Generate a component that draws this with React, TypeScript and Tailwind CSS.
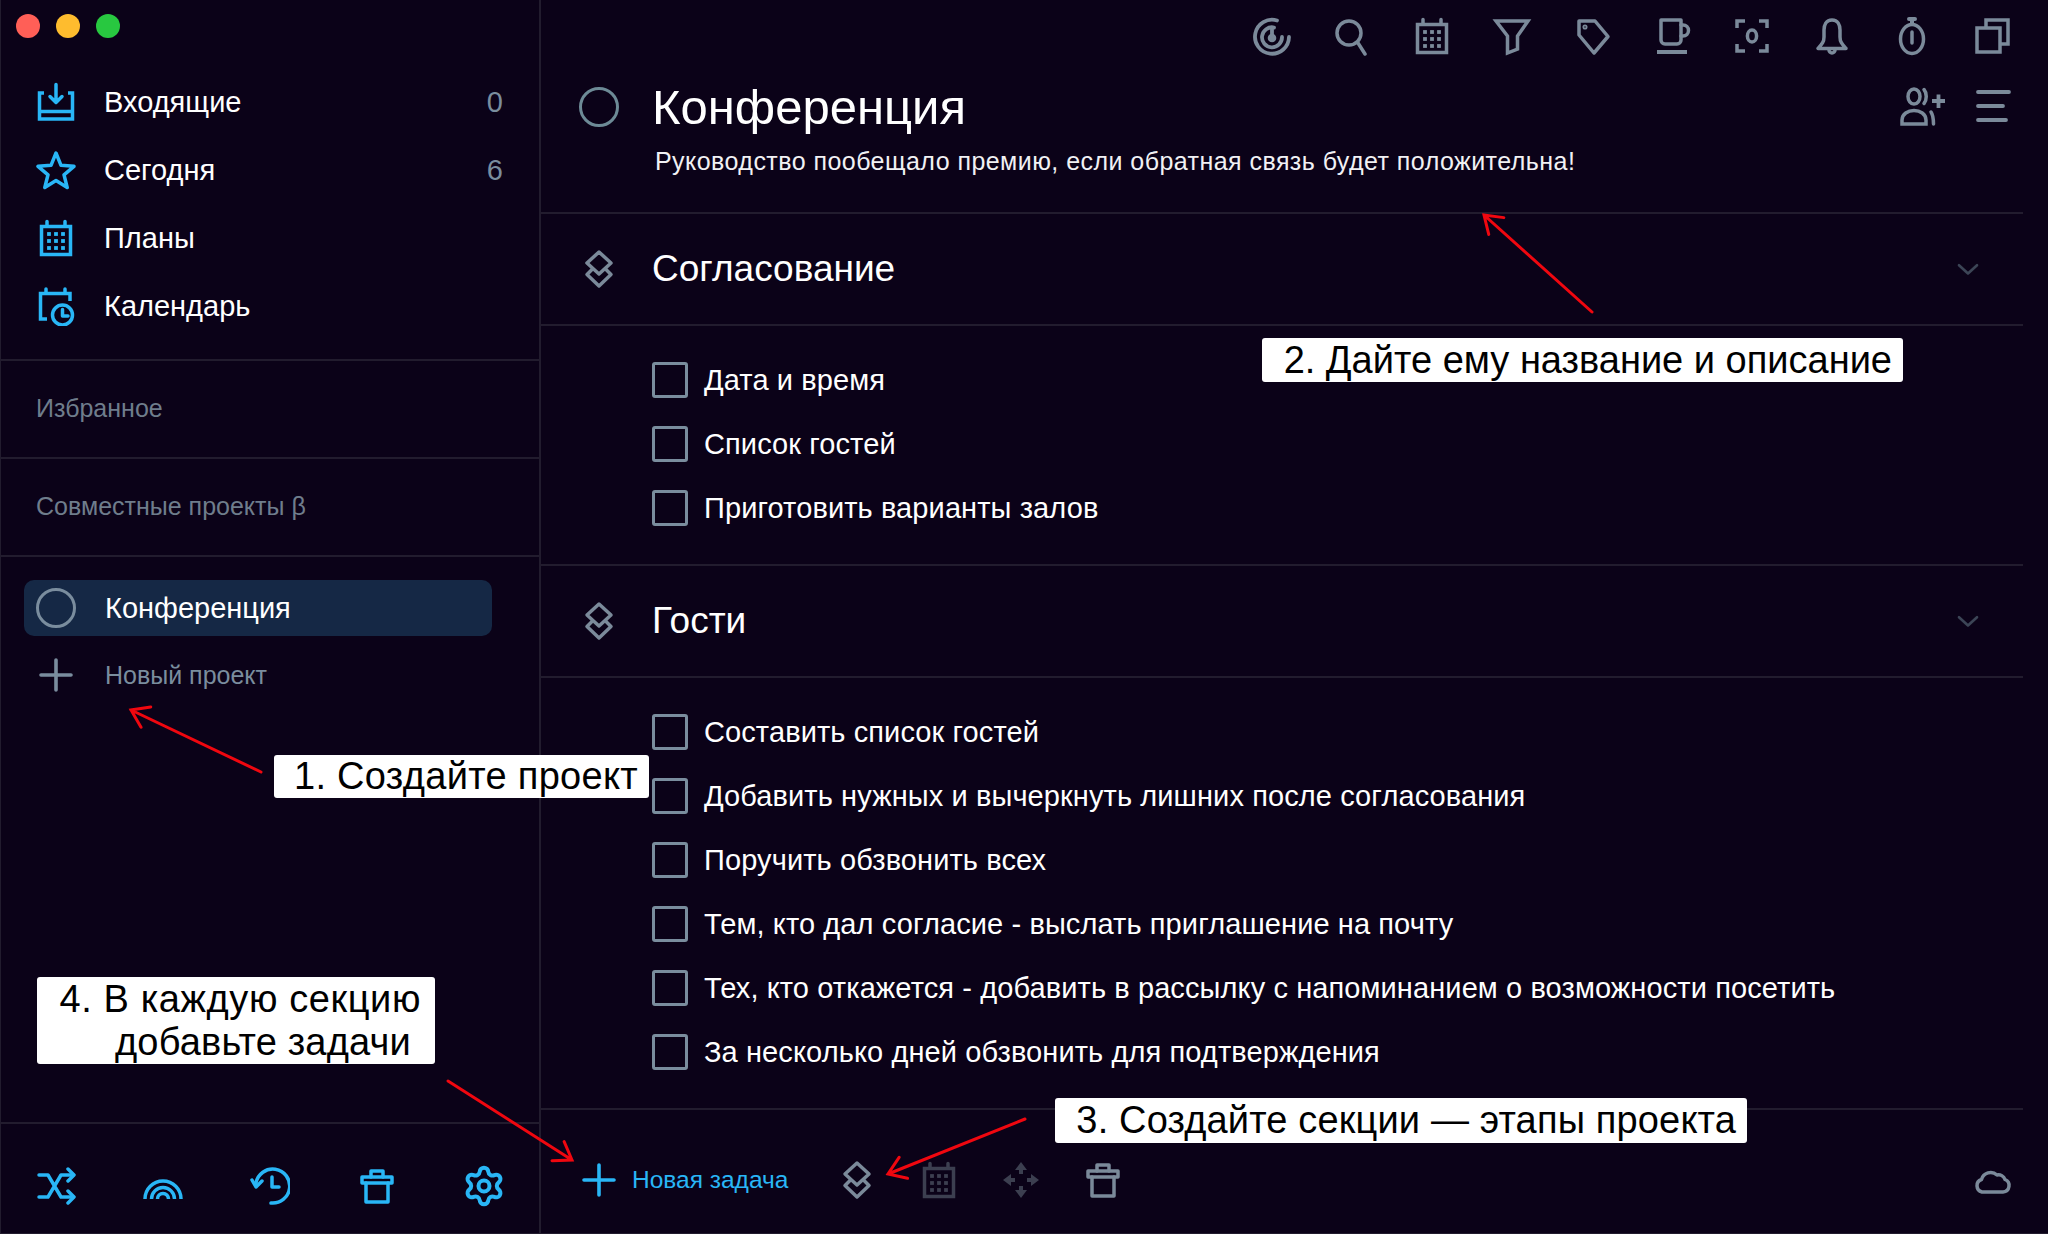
import React from 'react';
import { Settings } from 'lucide-react';

type IconProps = { className?: string };

const Svg = ({ className, box = '0 0 40 40', sw = 3.5, children }: IconProps & { box?: string; sw?: number; children: React.ReactNode }) => (
  <svg viewBox={box} fill="none" stroke="currentColor" strokeWidth={sw} strokeLinecap="round" strokeLinejoin="round" className={className}>
    {children}
  </svg>
);

const Dots = ({ x, y, step }: { x: number; y: number; step: number }) => (
  <g fill="currentColor" stroke="none">
    {[0, 1, 2].flatMap((r) =>
      [0, 1, 2].map((c) => <rect key={`${r}-${c}`} x={x + c * step} y={y + r * step} width="3.8" height="3.8" />)
    )}
  </g>
);

const InboxIcon = ({ className }: IconProps) => (
  <Svg className={className}>
    <path strokeLinecap="butt" strokeLinejoin="miter" d="M8 11H3.5V37H36.5V11H32" />
    <path strokeLinecap="butt" d="M4 29.500H36" />
    <path d="M20 2.500V20M14 14.500L20 20.500L26 14.500" />
  </Svg>
);
const StarIcon = ({ className }: IconProps) => (
  <Svg className={className}>
    <path d="M20 3L25 15.300L38 16.300L28 24.800L31.200 37.500L20 30.600L8.800 37.500L12 24.800L2 16.300L15 15.300Z" />
  </Svg>
);
const CalendarIcon = ({ className }: IconProps) => (
  <Svg className={className}>
    <path strokeLinecap="butt" strokeLinejoin="miter" d="M5.500 8.500H34.500V36.500H5.500Z" />
    <path d="M11 3.500V8M29 3.500V8" />
    <Dots x={11.1} y={14.1} step={7} />
  </Svg>
);
const CalendarClockIcon = ({ className }: IconProps) => (
  <Svg className={className}>
    <path strokeLinecap="butt" strokeLinejoin="miter" d="M34 15V7.500H4.500V33H11" />
    <path d="M10 3V7M29 3V7" />
    <circle cx="26.500" cy="29" r="10" />
    <path d="M26.500 23.500V30H32" />
  </Svg>
);
const RadarIcon = ({ className }: IconProps) => (
  <Svg className={className} sw={3.8}>
    <path d="M25 4.500A17 17 0 1 0 37 21" />
    <path d="M22 11.500A10 10 0 1 0 30 21" />
    <path d="M20 12V22" />
    <circle cx="20" cy="22" r="2.400" fill="currentColor" />
  </Svg>
);
const SearchIcon = ({ className }: IconProps) => (
  <Svg className={className}>
    <circle cx="17" cy="17" r="12" />
    <path d="M26 27L33 38" />
  </Svg>
);
const FilterIcon = ({ className }: IconProps) => (
  <Svg className={className}>
    <path strokeLinejoin="miter" d="M4 5H36L25.500 20V33L15.500 37V20Z" />
  </Svg>
);
const TagIcon = ({ className }: IconProps) => (
  <Svg className={className}>
    <path d="M7 5H23L36 20.500L22 37L7 19Z" />
    <circle cx="13" cy="11" r="0.800" fill="currentColor" />
  </Svg>
);
const CupIcon = ({ className }: IconProps) => (
  <Svg className={className}>
    <path d="M9 4H29V24A4 4 0 0 1 25 28H13A4 4 0 0 1 9 24Z" />
    <path d="M29 9H31A5.500 5.500 0 0 1 31 20H29" />
    <path strokeWidth="4" strokeLinecap="butt" d="M5 36H35" />
  </Svg>
);
const FocusIcon = ({ className }: IconProps) => (
  <Svg className={className}>
    <path strokeLinecap="butt" strokeLinejoin="miter" d="M5 12V5H13M27 5H35V12M5 28V35H13M27 35H35V28" />
    <ellipse cx="20" cy="20" rx="4.600" ry="6" />
  </Svg>
);
const BellIcon = ({ className }: IconProps) => (
  <Svg className={className}>
    <path d="M20 4C14 4 12 9 12 14V21C12 26 10 28 6 32.500H34C30 28 28 26 28 21V14C28 9 26 4 20 4Z" />
    <path d="M17 34A3 3 0 0 0 23 34" />
  </Svg>
);
const TimerIcon = ({ className }: IconProps) => (
  <Svg className={className}>
    <ellipse cx="20" cy="23" rx="11.500" ry="14.500" />
    <path strokeWidth="4" d="M17 3H23M20 4V8" />
    <path d="M20 16V27" />
  </Svg>
);
const CopyIcon = ({ className }: IconProps) => (
  <Svg className={className}>
    <path strokeLinecap="butt" strokeLinejoin="miter" d="M14 11V4H36V28H28" />
    <path strokeLinecap="butt" strokeLinejoin="miter" d="M5 12H28V36H5Z" />
  </Svg>
);
const UserPlusIcon = ({ className }: IconProps) => (
  <Svg className={className} box="0 0 48 40">
    <ellipse cx="15" cy="9.500" rx="6" ry="7.500" />
    <path d="M25 2.500C28 6 28 13 25 16.500" />
    <path strokeLinejoin="miter" d="M3 37V33C3 27 9 23.500 15 23.500S27 27 27 33V37Z" />
    <path d="M32 25C34 28 34.500 32 34.500 37" />
    <path strokeWidth="3.800" strokeLinecap="butt" d="M33 14H46M39.500 7.500V21" />
  </Svg>
);
const MenuIcon = ({ className }: IconProps) => (
  <Svg className={className} sw={3.8}>
    <path d="M5 5H36M5 19H30M5 33H33" />
  </Svg>
);
const LayersIcon = ({ className }: IconProps) => (
  <Svg className={className}>
    <path d="M20 3L32 14L20 25L8 14Z" />
    <path d="M13 20.500L8 25.500L20 37L32 25.500L27 20.500" />
  </Svg>
);
const ChevronIcon = ({ className }: IconProps) => (
  <Svg className={className}>
    <path d="M8 15L20 26L32 15" />
  </Svg>
);
const PlusIcon = ({ className }: IconProps) => (
  <Svg className={className} sw={3.6}>
    <path d="M20 5V35M5 20H35" />
  </Svg>
);
const ShuffleIcon = ({ className }: IconProps) => (
  <Svg className={className}>
    <path d="M3 9H12L25 31H37M3 31H12L25 9H37" />
    <path d="M32 3L38 9L32 15M32 25L38 31L32 37" />
  </Svg>
);
const RainbowIcon = ({ className }: IconProps) => (
  <Svg className={className}>
    <path strokeLinecap="butt" d="M2 33A18 18 0 0 1 38 33M8.500 33A11.500 11.500 0 0 1 31.500 33M14.500 33A5.500 5.500 0 0 1 25.500 33" />
  </Svg>
);
const HistoryIcon = ({ className }: IconProps) => (
  <Svg className={className}>
    <path d="M6 17A17 17 0 1 1 21 37" />
    <path d="M2 14L6 21L12 15" />
    <path d="M22 11V21H29" />
  </Svg>
);
const TrashIcon = ({ className }: IconProps) => (
  <Svg className={className}>
    <path d="M5 11H35V17H5Z" />
    <path d="M14 11V5H26V11" />
    <path d="M9 17V36H31V17" />
  </Svg>
);
const MoveIcon = ({ className }: IconProps) => (
  <Svg className={className} sw={0}>
    <g fill="currentColor" stroke="none">
      <path d="M20 2L26 10H22V14H18V10H14Z" />
      <path d="M20 38L26 30H22V26H18V30H14Z" />
      <path d="M2 20L10 14V18H14V22H10V26Z" />
      <path d="M38 20L30 14V18H26V22H30V26Z" />
    </g>
  </Svg>
);
const CloudIcon = ({ className }: IconProps) => (
  <Svg className={className}>
    <path d="M10 32H31A6.500 6.500 0 0 0 33 19.500A7 7 0 0 0 25 15A9.500 9.500 0 0 0 9.500 19.500A6.500 6.500 0 0 0 10 32Z" />
  </Svg>
);

const Ring = ({ className }: IconProps) => (
  <div className={`h-10 w-10 shrink-0 rounded-full border-[3.5px] ${className}`} />
);

const navItems = [
  { icon: InboxIcon, label: 'Входящие', count: '0' },
  { icon: StarIcon, label: 'Сегодня', count: '6' },
  { icon: CalendarIcon, label: 'Планы', count: '' },
  { icon: CalendarClockIcon, label: 'Календарь', count: '' },
];

const topIcons = [RadarIcon, SearchIcon, CalendarIcon, FilterIcon, TagIcon, CupIcon, FocusIcon, BellIcon, TimerIcon, CopyIcon];

const sections = [
  {
    title: 'Согласование',
    tasks: ['Дата и время', 'Список гостей', 'Приготовить варианты залов'],
  },
  {
    title: 'Гости',
    tasks: [
      'Составить список гостей',
      'Добавить нужных и вычеркнуть лишних после согласования',
      'Поручить обзвонить всех',
      'Тем, кто дал согласие - выслать приглашение на почту',
      'Тех, кто откажется - добавить в рассылку с напоминанием о возможности посетить',
      'За несколько дней обзвонить для подтверждения',
    ],
  },
];

const Arrow = ({ x1, y1, x2, y2 }: { x1: number; y1: number; x2: number; y2: number }) => {
  const a = Math.atan2(y1 - y2, x1 - x2);
  const head = (d: number) => `${x2 + 20 * Math.cos(a + d)} ${y2 + 20 * Math.sin(a + d)}`;
  return <path d={`M${x1} ${y1}L${x2} ${y2}M${head(0.6)}L${x2} ${y2}L${head(-0.6)}`} />;
};

export default function App() {
  return (
    <div className="relative flex h-[1234px] w-[2048px] overflow-hidden bg-[#0b0218] text-white shadow-[inset_1px_-1px_0_#221c2e] [font-family:'Liberation_Sans',sans-serif]">
      {/* Sidebar */}
      <aside className="flex w-[541px] shrink-0 flex-col border-r-2 border-[#221c2e]">
        <div className="flex h-[68px] items-start gap-[16px] pl-[16px] pt-[14px]">
          <span className="h-6 w-6 rounded-full bg-[#ff5f57]" />
          <span className="h-6 w-6 rounded-full bg-[#febc2e]" />
          <span className="h-6 w-6 rounded-full bg-[#28c840]" />
        </div>
        <nav className="flex flex-col pb-[19px]">
          {navItems.map(({ icon: Icon, label, count }) => (
            <div key={label} className="flex h-[68px] items-center pl-[36px] pr-[36px]">
              <Icon className="h-10 w-10 text-[#29b6f6]" />
              <span className="ml-[28px] flex-1 pt-[2px] text-[29px]">{label}</span>
              <span className="pt-[2px] text-[29px] text-[#7a8d9e]">{count}</span>
            </div>
          ))}
        </nav>
        <div className="flex h-[98px] items-center border-t-2 border-[#221c2e] pl-[36px] text-[25px] text-[#6f7d8c]">Избранное</div>
        <div className="flex h-[98px] items-center border-t-2 border-[#221c2e] pl-[36px] text-[25px] text-[#6f7d8c]">Совместные проекты β</div>
        <div className="border-t-2 border-[#221c2e] px-[24px] pt-[23px]">
          <div className="flex h-[56px] w-[468px] items-center rounded-[10px] bg-[#152845] pl-[12px]">
            <Ring className="border-[#7a8d9e]" />
            <span className="ml-[29px] pt-[1px] text-[29px]">Конференция</span>
          </div>
          <div className="mt-[5px] flex h-[68px] items-center pl-[12px]">
            <PlusIcon className="h-10 w-10 text-[#7a8d9e]" />
            <span className="ml-[29px] pt-[1px] text-[25px] text-[#7a8d9e]">Новый проект</span>
          </div>
        </div>
        <div className="flex-1" />
        <div className="flex h-[112px] items-start gap-[67px] border-t-2 border-[#221c2e] pl-[36px] pt-[42px]">
          <ShuffleIcon className="h-10 w-10 shrink-0 text-[#29b6f6]" />
          <RainbowIcon className="h-10 w-10 shrink-0 text-[#29b6f6]" />
          <HistoryIcon className="h-10 w-10 shrink-0 text-[#29b6f6]" />
          <TrashIcon className="h-10 w-10 shrink-0 text-[#29b6f6]" />
          <Settings strokeWidth={2.2} className="-ml-[2px] -mt-[2px] h-[44px] w-[44px] shrink-0 text-[#29b6f6]" />
        </div>
      </aside>

      {/* Main */}
      <main className="flex min-w-0 flex-1 flex-col pr-[25px]">
        <div className="flex h-[72px] items-center justify-end gap-[40px] pr-[11px]">
          {topIcons.map((Icon, i) => (
            <Icon key={i} className="h-10 w-10 text-[#7b8a9a]" />
          ))}
        </div>
        <header className="h-[140px] pl-[38px]">
          <div className="flex h-[70px] items-center">
            <Ring className="border-[#6d8a96]" />
            <h1 className="ml-[33px] flex-1 pt-[2px] text-[49px]">Конференция</h1>
            <div className="flex items-center gap-[26px] pr-[10px]">
              <UserPlusIcon className="h-10 w-12 text-[#7b8a9a]" />
              <MenuIcon className="h-10 w-10 text-[#7b8a9a]" />
            </div>
          </div>
          <p className="ml-[76px] text-[25px] leading-[38px] tracking-[0.45px] text-[#f1f1f4]">
            Руководство пообещало премию, если обратная связь будет положительна!
          </p>
        </header>
        {sections.map((section) => (
          <section key={section.title}>
            <div className="flex h-[114px] items-center border-y-2 border-[#221c2e] pl-[38px] pr-[40px]">
              <LayersIcon className="h-10 w-10 text-[#7b8a9a]" />
              <h2 className="ml-[33px] flex-1 text-[37px]">{section.title}</h2>
              <ChevronIcon className="h-[30px] w-[30px] text-[#3c4556]" />
            </div>
            <ul className="pb-[24px] pl-[111px] pt-[22px]">
              {section.tasks.map((task) => (
                <li key={task} className="flex h-16 items-center gap-4">
                  <span className="h-9 w-9 shrink-0 rounded-[3px] border-[3.5px] border-[#7a8d9e]" />
                  <span className="pt-[2px] text-[29px] tracking-[0.1px]">{task}</span>
                </li>
              ))}
            </ul>
          </section>
        ))}
        <footer className="flex flex-1 items-start border-t-2 border-[#221c2e] pl-[38px] pr-[11px] pt-[50px]">
          <PlusIcon className="h-10 w-10 text-[#29b6f6]" />
          <span className="ml-[13px] text-[24.5px] leading-[40px] text-[#29b6f6]">Новая задача</span>
          <div className="ml-[49px] flex items-center gap-[42px]">
            <LayersIcon className="h-10 w-10 text-[#7b8a9a]" />
            <CalendarIcon className="h-10 w-10 text-[#3c3f50]" />
            <MoveIcon className="h-10 w-10 text-[#3c3f50]" />
            <TrashIcon className="h-10 w-10 text-[#7b8a9a]" />
          </div>
          <div className="flex-1" />
          <CloudIcon className="h-10 w-10 text-[#7b8a9a]" />
        </footer>
      </main>

      {/* Annotations drawn over the screenshot */}
      <svg viewBox="0 0 2048 1234" fill="none" stroke="#f0070f" strokeWidth={3} strokeLinecap="round" className="pointer-events-none absolute inset-0 h-[1234px] w-[2048px]">
        <Arrow x1={261} y1={772} x2={131} y2={710} />
        <Arrow x1={1592} y1={312} x2={1484} y2={215} />
        <Arrow x1={1025} y1={1119} x2={888} y2={1174} />
        <Arrow x1={448} y1={1081} x2={572} y2={1160} />
      </svg>
      <div className="absolute left-[274px] top-[755px] flex h-[43px] w-[375px] items-center justify-end rounded-[3px] bg-white pr-[11px] text-[38px] tracking-[0.3px] text-black">1. Создайте проект</div>
      <div className="absolute left-[1262px] top-[338px] flex h-[44px] w-[641px] items-center justify-end rounded-[3px] bg-white pr-[11px] text-[38px] text-black">2. Дайте ему название и описание</div>
      <div className="absolute left-[1055px] top-[1098px] flex h-[45px] w-[692px] items-center justify-end rounded-[3px] bg-white pr-[11px] text-[38px] tracking-[0.15px] text-black">3. Создайте секции — этапы проекта</div>
      <div className="absolute left-[37px] top-[977px] h-[87px] w-[398px] rounded-[3px] bg-white pr-[14px] pt-[1px] text-right text-[38px] leading-[43px] text-black">
        <div className="tracking-[0.6px]">4. В каждую секцию</div>
        <div className="pr-[10px] tracking-[0.2px]">добавьте задачи</div>
      </div>
    </div>
  );
}
